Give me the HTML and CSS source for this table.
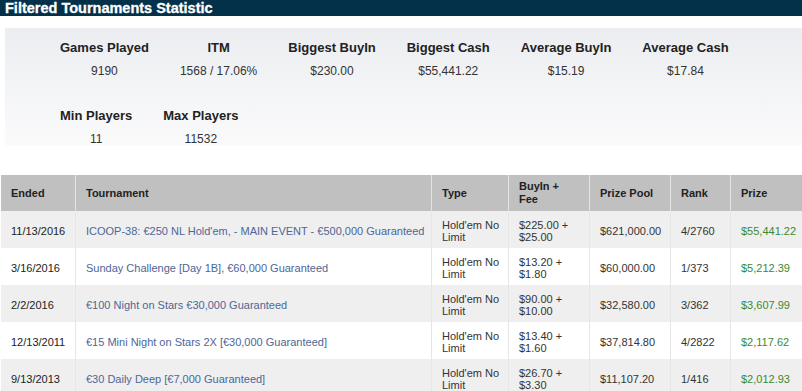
FILE: index.html
```html
<!DOCTYPE html>
<html>
<head>
<meta charset="utf-8">
<title>Filtered Tournaments Statistic</title>
<link rel="stylesheet" href="styles.css">
</head>
<body>
<div class="title-bar">Filtered Tournaments Statistic</div>
<div class="stats">
  <div class="stats-row">
    <div class="stat"><div class="stat-label">Games Played</div><div class="stat-value">9190</div></div>
    <div class="stat"><div class="stat-label">ITM</div><div class="stat-value">1568 / 17.06%</div></div>
    <div class="stat"><div class="stat-label">Biggest BuyIn</div><div class="stat-value">$230.00</div></div>
    <div class="stat"><div class="stat-label">Biggest Cash</div><div class="stat-value">$55,441.22</div></div>
    <div class="stat"><div class="stat-label">Average BuyIn</div><div class="stat-value">$15.19</div></div>
    <div class="stat"><div class="stat-label">Average Cash</div><div class="stat-value">$17.84</div></div>
  </div>
  <div class="stats-row">
    <div class="stat"><div class="stat-label">Min Players</div><div class="stat-value">11</div></div>
    <div class="stat"><div class="stat-label">Max Players</div><div class="stat-value">11532</div></div>
  </div>
</div>
<table class="results">
  <colgroup>
    <col class="c-ended"><col class="c-tour"><col class="c-type"><col class="c-buyin"><col class="c-pool"><col class="c-rank"><col class="c-prize">
  </colgroup>
  <thead>
    <tr><th>Ended</th><th>Tournament</th><th>Type</th><th>BuyIn +<br>Fee</th><th>Prize Pool</th><th>Rank</th><th>Prize</th></tr>
  </thead>
  <tbody>
    <tr><td>11/13/2016</td><td><a class="tour" href="#">ICOOP-38: €250 NL Hold'em, - MAIN EVENT - €500,000 Guaranteed</a></td><td class="two">Hold'em No<br>Limit</td><td class="two">$225.00 +<br>$25.00</td><td>$621,000.00</td><td>4/2760</td><td class="prize">$55,441.22</td></tr>
    <tr><td>3/16/2016</td><td><a class="tour" href="#">Sunday Challenge [Day 1B], €60,000 Guaranteed</a></td><td class="two">Hold'em No<br>Limit</td><td class="two">$13.20 +<br>$1.80</td><td>$60,000.00</td><td>1/373</td><td class="prize">$5,212.39</td></tr>
    <tr><td>2/2/2016</td><td><a class="tour" href="#">€100 Night on Stars €30,000 Guaranteed</a></td><td class="two">Hold'em No<br>Limit</td><td class="two">$90.00 +<br>$10.00</td><td>$32,580.00</td><td>3/362</td><td class="prize">$3,607.99</td></tr>
    <tr><td>12/13/2011</td><td><a class="tour" href="#">€15 Mini Night on Stars 2X [€30,000 Guaranteed]</a></td><td class="two">Hold'em No<br>Limit</td><td class="two">$13.40 +<br>$1.60</td><td>$37,814.80</td><td>4/2822</td><td class="prize">$2,117.62</td></tr>
    <tr><td>9/13/2013</td><td><a class="tour" href="#">€30 Daily Deep [€7,000 Guaranteed]</a></td><td class="two">Hold'em No<br>Limit</td><td class="two">$26.70 +<br>$3.30</td><td>$11,107.20</td><td>1/416</td><td class="prize">$2,012.93</td></tr>
  </tbody>
</table>
</body>
</html>
```

FILE: styles.css
```css
html, body {
  margin: 0;
  padding: 0;
  overflow: hidden;
  background: #ffffff;
}
body {
  font-family: "Liberation Sans", Arial, sans-serif;
  color: #333333;
  width: 802px;
}
.title-bar {
  background: #04314a;
  color: #ffffff;
  font-weight: bold;
  font-size: 14.5px;
  line-height: 16px;
  height: 16px;
  padding-left: 5px;
  -webkit-text-stroke: 0.3px #ffffff;
  white-space: nowrap;
}
.stats {
  margin: 12px 0 0 5px;
  padding: 12px 0 0 55px;
  height: 106px;
  background: linear-gradient(to bottom, #ebedf0 0%, #fbfbfc 100%);
  display: flex;
  flex-direction: column;
  gap: 29px;
}
.stats-row {
  display: flex;
  gap: 31px;
}
.stat {
  text-align: center;
}
.stat-label {
  font-weight: bold;
  font-size: 13px;
  line-height: 16px;
  color: #222222;
  white-space: nowrap;
}
.stat-value {
  font-size: 12px;
  line-height: 16px;
  margin-top: 7px;
  color: #333333;
  white-space: nowrap;
}
.results {
  margin-top: 29px;
  width: 802px;
  border-collapse: collapse;
  table-layout: fixed;
  font-size: 11px;
}
.c-ended { width: 75px; }
.c-tour { width: 356px; }
.c-type { width: 77px; }
.c-buyin { width: 81px; }
.c-pool { width: 81px; }
.c-rank { width: 60px; }
.c-prize { width: 72px; }
.results th {
  background: #c0c0c0;
  color: #222222;
  font-weight: bold;
  text-align: left;
  height: 36px;
  padding: 0 10px;
  line-height: 13px;
  border-left: 1px solid #e4e4e4;
  vertical-align: middle;
}
.results th:first-child {
  border-left: 1px solid #ffffff;
}
.results td {
  height: 34px;
  padding: 3px 10px 0 10px;
  line-height: 12.5px;
  border-left: 1px solid #e6e6e6;
  vertical-align: middle;
  color: #333333;
  white-space: nowrap;
}
.results td:first-child {
  border-left: 1px solid #ffffff;
  color: #222222;
}
.results tbody tr:nth-child(odd) td {
  background: #efefef;
}
.results tbody tr:nth-child(even) td {
  background: #ffffff;
}
.tour {
  color: #4e6696;
  text-decoration: none;
}
.prize.prize {
  color: #3a8a30;
}
```
